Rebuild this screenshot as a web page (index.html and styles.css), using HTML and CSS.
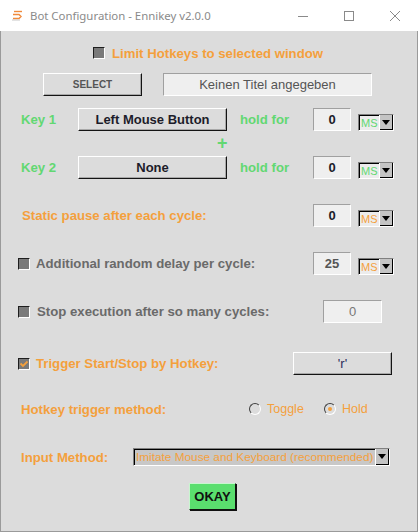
FILE: index.html
```html
<!DOCTYPE html>
<html>
<head>
<meta charset="utf-8">
<link rel="stylesheet" href="styles.css">
</head>
<body>
<div class="window">
  <div class="titlebar">
    <svg class="appicon" width="12" height="11" viewBox="0 0 12 11">
      <path d="M3 1.5 H11" stroke="#f08a3c" stroke-width="1.4" fill="none"/>
      <path d="M2 4.5 H8 L10 6.5 L8 8.5 H2" stroke="#f08a3c" stroke-width="1.4" fill="none"/>
      <path d="M1 10 H9" stroke="#c8c8c8" stroke-width="1" fill="none"/>
    </svg>
    <span class="title">Bot Configuration - Ennikey v2.0.0</span>
    <div class="controls">
      <span class="ctl"><svg width="12" height="12" viewBox="0 0 12 12"><path d="M1 6.5 H11" stroke="#8a8a8a" stroke-width="1"/></svg></span>
      <span class="ctl"><svg width="12" height="12" viewBox="0 0 12 12"><rect x="1.5" y="1.5" width="9" height="9" stroke="#8a8a8a" stroke-width="1" fill="none"/></svg></span>
      <span class="ctl"><svg width="12" height="12" viewBox="0 0 12 12"><path d="M1 1 L11 11 M11 1 L1 11" stroke="#8a8a8a" stroke-width="1"/></svg></span>
    </div>
  </div>
  <div class="content">
    <div class="row row-limit">
      <span class="check"></span>
      <span class="lbl orange">Limit Hotkeys to selected window</span>
    </div>
    <div class="row row-select">
      <span class="btn btn-select">SELECT</span>
      <span class="field field-title">Keinen Titel angegeben</span>
    </div>
    <div class="row row-key first-key">
      <span class="lbl green key-lbl">Key 1</span>
      <span class="btn btn-key">Left Mouse Button</span>
      <span class="lbl green hold-lbl">hold for</span>
      <span class="field field-num">0</span>
      <span class="ms green-ms"><span class="ms-txt">MS</span><span class="ms-arrow"></span></span>
    </div>
    <div class="row row-plus"><span class="plus">+</span></div>
    <div class="row row-key">
      <span class="lbl green key-lbl">Key 2</span>
      <span class="btn btn-key">None</span>
      <span class="lbl green hold-lbl">hold for</span>
      <span class="field field-num">0</span>
      <span class="ms green-ms"><span class="ms-txt">MS</span><span class="ms-arrow"></span></span>
    </div>
    <div class="row row-static">
      <span class="lbl orange static-lbl">Static pause after each cycle:</span>
      <span class="field field-num">0</span>
      <span class="ms orange-ms"><span class="ms-txt">MS</span><span class="ms-arrow"></span></span>
    </div>
    <div class="row row-random">
      <span class="check small"></span>
      <span class="lbl grey random-lbl">Additional random delay per cycle:</span>
      <span class="field field-num dim">25</span>
      <span class="ms orange-ms"><span class="ms-txt">MS</span><span class="ms-arrow"></span></span>
    </div>
    <div class="row row-stop">
      <span class="check small"></span>
      <span class="lbl grey stop-lbl">Stop execution after so many cycles:</span>
      <span class="field field-cycles">0</span>
    </div>
    <div class="row row-trigger">
      <span class="check small checked"><svg width="10" height="10" viewBox="0 0 10 10"><path d="M1.5 4.5 L4 7 L8.5 2.5" stroke="#f4a03c" stroke-width="1.8" fill="none"/></svg></span>
      <span class="lbl orange trigger-lbl">Trigger Start/Stop by Hotkey:</span>
      <span class="btn btn-hotkey">'r'</span>
    </div>
    <div class="row row-method">
      <span class="lbl orange method-lbl">Hotkey trigger method:</span>
      <span class="radio"></span><span class="opt toggle-opt">Toggle</span>
      <span class="radio on"><span class="dot"></span></span><span class="opt">Hold</span>
    </div>
    <div class="row row-input">
      <span class="lbl orange input-lbl">Input Method:</span>
      <span class="select"><span class="select-txt">Imitate Mouse and Keyboard (recommended)</span><span class="sel-arrow"></span></span>
    </div>
    <div class="row row-okay">
      <span class="btn-okay">OKAY</span>
    </div>
  </div>
</div>
</body>
</html>
```

FILE: styles.css
```css
html, body {
  margin: 0;
  padding: 0;
  background: #dcdcdc;
}
.window {
  width: 418px;
  height: 532px;
  box-sizing: border-box;
  border: 1px solid #9a9a9a;
  border-top: none;
  background: #dcdcdc;
  font-family: "Liberation Sans", Arial, sans-serif;
}
.titlebar {
  height: 31px;
  background: #ffffff;
  display: flex;
  align-items: center;
  margin: 0 -1px;
}
.appicon {
  margin-left: 11px;
  margin-top: -1px;
}
.title {
  margin-left: 7px;
  font-family: "Noto Sans", sans-serif;
  font-size: 11.4px;
  color: #8a8a8a;
}
.controls {
  margin-left: auto;
  display: flex;
}
.ctl {
  width: 46px;
  height: 31px;
  display: flex;
  align-items: center;
  justify-content: center;
}
.content {
  display: flex;
  flex-direction: column;
}
.row {
  display: flex;
  align-items: center;
}
.lbl {
  font-weight: bold;
  font-size: 13.2px;
  white-space: nowrap;
}
.orange { color: #f4a03c; }
.green { color: #62d872; }
.grey { color: #6a6a6a; }

.check {
  width: 10px;
  height: 10px;
  background: #7a7a7a;
  border: 1px solid;
  border-color: #1e1e1e #ffffff #ffffff #1e1e1e;
  display: inline-flex;
  align-items: center;
  justify-content: center;
  flex: none;
}
.row-limit {
  margin-top: 13px;
  height: 18px;
  padding-left: 92px;
}
.row-limit .lbl { margin-left: 7px; }

.btn {
  box-sizing: border-box;
  height: 23px;
  background: #dcdcdc;
  border: 1px solid;
  border-color: #ffffff #141414 #141414 #ffffff;
  box-shadow: inset -1px -1px 0 #a8a8a8;
  display: inline-flex;
  align-items: center;
  justify-content: center;
  font-weight: bold;
  font-size: 13px;
  color: #1c1c2a;
  flex: none;
}
.field {
  box-sizing: border-box;
  height: 23px;
  background: #efefef;
  border: 1px solid;
  border-color: #a0a0a0 #ffffff #ffffff #a0a0a0;
  display: inline-flex;
  align-items: center;
  justify-content: center;
  font-size: 13px;
  flex: none;
}
.row-select {
  margin-top: 11px;
  padding-left: 42px;
}
.btn-select {
  width: 99px;
  font-size: 10px;
  color: #555555;
}
.field-title {
  width: 209px;
  margin-left: 21px;
  color: #555555;
}
.row-key {
  padding-left: 20px;
  height: 23px;
}
.first-key { margin-top: 12px; }
.key-lbl { width: 57px; }
.btn-key { width: 149px; }
.hold-lbl { width: 73px; margin-left: 13px; }
.field-num {
  width: 38px;
  font-weight: bold;
  color: #1c1c2a;
}
.field-num.dim { color: #555555; font-weight: bold; }
.ms {
  box-sizing: border-box;
  width: 36px;
  height: 17px;
  margin-left: 7px;
  align-self: flex-end;
  border: 1px solid;
  border-color: #808080 #ffffff #ffffff #808080;
  box-shadow: inset 1px 1px 0 #000;
  background: #ececec;
  display: flex;
  align-items: stretch;
  flex: none;
}
.ms-txt {
  flex: 1;
  min-width: 0;
  font-size: 11px;
  line-height: 15px;
  padding-left: 2px;
  padding-top: 1px;
  white-space: nowrap;
}
.green-ms .ms-txt { color: #62d872; }
.orange-ms .ms-txt { color: #f4a03c; }
.ms-arrow, .sel-arrow {
  width: 14px;
  flex: none;
  box-sizing: border-box;
  background: #c4c4c4;
  border-left: 1px solid #ffffff;
  box-shadow: inset -1px -1px 0 #000;
  position: relative;
}
.ms-arrow::after, .sel-arrow::after {
  content: "";
  position: absolute;
  left: 2px;
  top: 5px;
  border-left: 4.5px solid transparent;
  border-right: 4.5px solid transparent;
  border-top: 5px solid #000;
}
.row-plus {
  height: 25px;
  padding-left: 216px;
}
.plus {
  font-weight: bold;
  font-size: 18px;
  color: #62d872;
  line-height: 25px;
}
.row-static {
  margin-top: 25px;
  padding-left: 21px;
  height: 23px;
}
.static-lbl { width: 291px; }
.row-random {
  margin-top: 25px;
  padding-left: 17px;
  height: 23px;
}
.random-lbl { width: 277px; margin-left: 6px; }
.row-stop {
  margin-top: 25px;
  padding-left: 17px;
  height: 23px;
}
.stop-lbl { width: 286px; margin-left: 7px; }
.field-cycles {
  width: 59px;
  color: #777777;
}
.row-trigger {
  margin-top: 29px;
  padding-left: 17px;
  height: 23px;
}
.check.checked { background: #7a7a7a; }
.trigger-lbl { width: 257px; margin-left: 6px; }
.btn-hotkey {
  width: 99px;
  color: #2b2b5a;
  font-weight: normal;
}
.row-method {
  margin-top: 23px;
  height: 22px;
  padding-left: 20px;
}
.method-lbl { width: 228px; }
.radio {
  box-sizing: border-box;
  width: 12px;
  height: 12px;
  border-radius: 50%;
  border: 1px solid;
  border-color: #404040 #ffffff #ffffff #404040;
  background: #dcdcdc;
  display: inline-flex;
  align-items: center;
  justify-content: center;
  flex: none;
}
.dot {
  width: 4px;
  height: 4px;
  border-radius: 50%;
  background: #f4a03c;
}
.opt {
  margin-left: 6px;
  font-family: "Liberation Sans", Arial, sans-serif;
  font-size: 12.5px;
  color: #f4a03c;
}
.toggle-opt { width: 57px; }
.row-input {
  margin-top: 28px;
  height: 18px;
  padding-left: 20px;
}
.input-lbl { width: 112px; }
.select {
  box-sizing: border-box;
  width: 257px;
  height: 18px;
  border: 1px solid;
  border-color: #808080 #ffffff #ffffff #808080;
  box-shadow: inset 1px 1px 0 #000;
  background: #c8c8c8;
  display: flex;
  align-items: stretch;
}
.select-txt {
  flex: 1;
  min-width: 0;
  font-family: "Liberation Sans", Arial, sans-serif;
  font-size: 11.8px;
  line-height: 16px;
  color: #f4a03c;
  padding-left: 2px;
  white-space: nowrap;
}
.row-okay {
  margin-top: 17px;
  padding-left: 188px;
}
.btn-okay {
  box-sizing: border-box;
  width: 47px;
  height: 27px;
  background: #5ade6e;
  border: 1px solid;
  border-color: #c8f5cf #101010 #101010 #c8f5cf;
  box-shadow: 1px 1px 0 #101010;
  display: inline-flex;
  align-items: center;
  justify-content: center;
  font-weight: bold;
  font-size: 13px;
  color: #101010;
}
```
